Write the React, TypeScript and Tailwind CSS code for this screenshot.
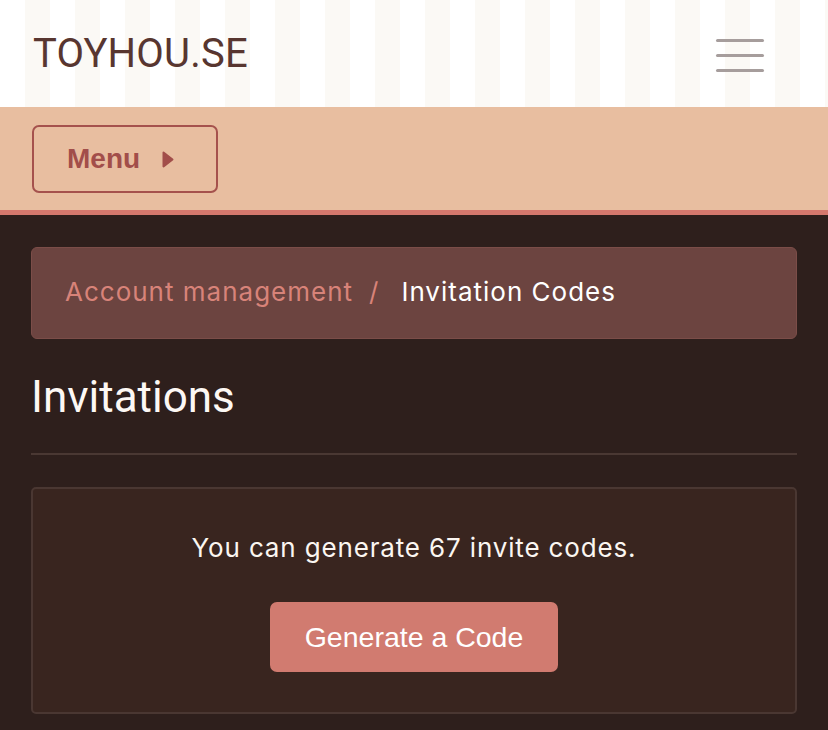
import React from 'react';

const App: React.FC = () => {
  return (
    <div className="w-[828px] h-[730px] overflow-hidden bg-[#2e1f1c] font-['Inter',sans-serif]">
      {/* Top bar */}
      <header className="h-[107px] flex items-center justify-between pl-[33px] pr-[64px] bg-[repeating-linear-gradient(90deg,#ffffff_0px,#ffffff_25px,#fbf9f5_25px,#fbf9f5_50px)]">
        <h1 className="font-['Roboto',sans-serif] text-[40px] leading-none text-[#583630] tracking-[0.2px]">TOYHOU.SE</h1>
        <button className="flex flex-col gap-[12px] w-[48px] mt-[4px]">
          <span className="h-[3px] w-full rounded-full bg-[#a69d9c]"></span>
          <span className="h-[3px] w-full rounded-full bg-[#a69d9c]"></span>
          <span className="h-[3px] w-full rounded-full bg-[#a69d9c]"></span>
        </button>
      </header>

      {/* Menu bar */}
      <div className="h-[108px] bg-[#e8bea0] border-b-[5px] border-[#d5786d] px-[32px] pt-[18px]">
        <button className="w-[186px] h-[68px] rounded-[7px] border-2 border-[#a5524d] flex items-center pl-[33px] gap-[22px] text-[#a24e4a] font-['Liberation_Sans',sans-serif] font-bold text-[28px]">
          <span>Menu</span>
          <svg width="12" height="17" viewBox="0 0 12 17">
            <path d="M1.5 1.5 L10.5 8.5 L1.5 15.5 Z" fill="#a24e4a" stroke="#a24e4a" strokeWidth="2" strokeLinejoin="round" />
          </svg>
        </button>
      </div>

      {/* Content */}
      <main className="px-[31px] pt-[32px]">
        <nav className="h-[92px] rounded-[6px] bg-[#6c4440] border border-[#7b4d48] flex items-center pl-[33px] pb-[4px] text-[26px] tracking-[1px]">
          <span className="text-[#d88379]">Account management</span>
          <span className="text-[#d88379] ml-[16px] mr-[22px]">/</span>
          <span className="text-white">Invitation Codes</span>
        </nav>

        <h2 className="font-['Roboto',sans-serif] text-[44px] leading-none text-[#fdf8f4] mt-[36px]">Invitations</h2>
        <div className="h-[2px] bg-[#4a3833] mt-[34px]"></div>

        <section className="mt-[32px] h-[227px] rounded-[5px] bg-[#39251f] border-2 border-[#4a3732] flex flex-col items-center pt-[46px]">
          <p className="text-[26px] leading-none text-[#fbf6f1] tracking-[0.85px]">You can generate 67 invite codes.</p>
          <button className="mt-[41px] w-[288px] h-[70px] rounded-[7px] bg-[#d17b70] text-white font-['Liberation_Sans',sans-serif] text-[28.5px]">
            Generate a Code
          </button>
        </section>
      </main>
    </div>
  );
};

export default App;
